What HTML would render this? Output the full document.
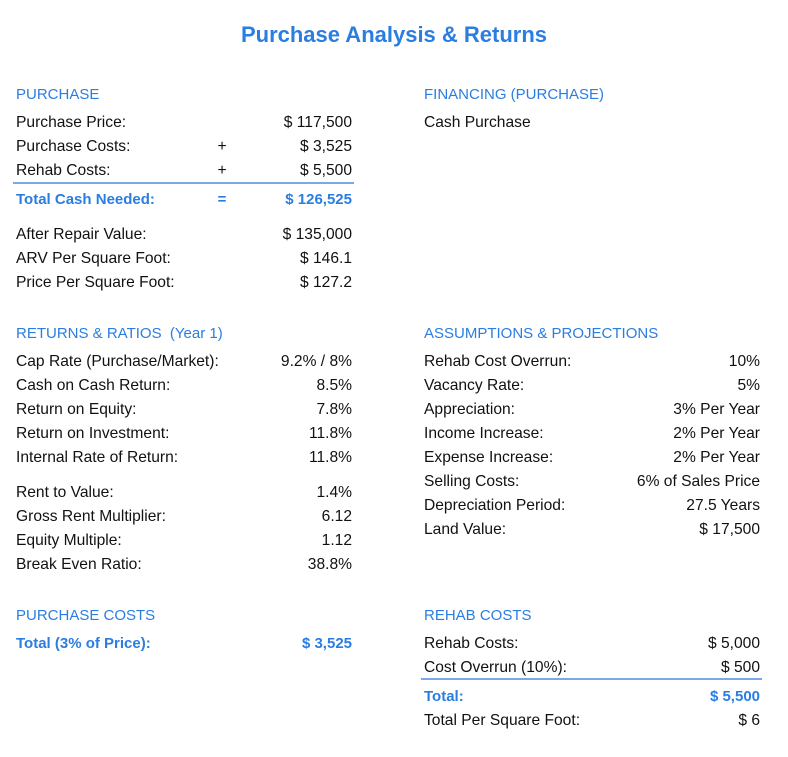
<!DOCTYPE html>
<html><head><meta charset="utf-8"><style>
body{margin:0;width:788px;height:757px;background:#fff;font-family:"Liberation Sans",sans-serif;font-size:15.6px;color:#111;position:relative;overflow:hidden}
.t{position:absolute;line-height:18px;white-space:nowrap}
.r{text-align:right}
.b{color:#2a7de1;font-size:15px}
.bb{color:#2a7de1;font-weight:bold;font-size:15px}
.op{position:absolute;width:20px;text-align:center;line-height:18px}
.ln{position:absolute;height:1.5px;background:#7aa9ea}
h1{position:absolute;top:20px;left:0;width:788px;margin:0;text-align:center;font-size:22px;font-weight:bold;color:#2a7de1;line-height:30px}
</style></head><body>
<h1>Purchase Analysis &amp; Returns</h1>

<div class="t b" style="left:16px;top:86px">PURCHASE</div>
<div class="t" style="left:16px;top:114px">Purchase Price:</div><div class="t r" style="right:436px;top:114px">$ 117,500</div>
<div class="t" style="left:16px;top:138px">Purchase Costs:</div><div class="op" style="left:212px;top:138px">+</div><div class="t r" style="right:436px;top:138px">$ 3,525</div>
<div class="t" style="left:16px;top:162px">Rehab Costs:</div><div class="op" style="left:212px;top:162px">+</div><div class="t r" style="right:436px;top:162px">$ 5,500</div>
<div class="ln" style="left:13px;width:341px;top:182px"></div>
<div class="t bb" style="left:16px;top:191px">Total Cash Needed:</div><div class="op bb" style="left:212px;top:191px">=</div><div class="t r bb" style="right:436px;top:191px">$ 126,525</div>
<div class="t" style="left:16px;top:226px">After Repair Value:</div><div class="t r" style="right:436px;top:226px">$ 135,000</div>
<div class="t" style="left:16px;top:250px">ARV Per Square Foot:</div><div class="t r" style="right:436px;top:250px">$ 146.1</div>
<div class="t" style="left:16px;top:274px">Price Per Square Foot:</div><div class="t r" style="right:436px;top:274px">$ 127.2</div>

<div class="t b" style="left:424px;top:86px">FINANCING (PURCHASE)</div>
<div class="t" style="left:424px;top:114px">Cash Purchase</div>

<div class="t b" style="left:16px;top:325px">RETURNS &amp; RATIOS &nbsp;(Year 1)</div>
<div class="t" style="left:16px;top:353px">Cap Rate (Purchase/Market):</div><div class="t r" style="right:436px;top:353px">9.2% / 8%</div>
<div class="t" style="left:16px;top:377px">Cash on Cash Return:</div><div class="t r" style="right:436px;top:377px">8.5%</div>
<div class="t" style="left:16px;top:401px">Return on Equity:</div><div class="t r" style="right:436px;top:401px">7.8%</div>
<div class="t" style="left:16px;top:425px">Return on Investment:</div><div class="t r" style="right:436px;top:425px">11.8%</div>
<div class="t" style="left:16px;top:449px">Internal Rate of Return:</div><div class="t r" style="right:436px;top:449px">11.8%</div>
<div class="t" style="left:16px;top:484px">Rent to Value:</div><div class="t r" style="right:436px;top:484px">1.4%</div>
<div class="t" style="left:16px;top:508px">Gross Rent Multiplier:</div><div class="t r" style="right:436px;top:508px">6.12</div>
<div class="t" style="left:16px;top:532px">Equity Multiple:</div><div class="t r" style="right:436px;top:532px">1.12</div>
<div class="t" style="left:16px;top:556px">Break Even Ratio:</div><div class="t r" style="right:436px;top:556px">38.8%</div>

<div class="t b" style="left:424px;top:325px">ASSUMPTIONS &amp; PROJECTIONS</div>
<div class="t" style="left:424px;top:353px">Rehab Cost Overrun:</div><div class="t r" style="right:28px;top:353px">10%</div>
<div class="t" style="left:424px;top:377px">Vacancy Rate:</div><div class="t r" style="right:28px;top:377px">5%</div>
<div class="t" style="left:424px;top:401px">Appreciation:</div><div class="t r" style="right:28px;top:401px">3% Per Year</div>
<div class="t" style="left:424px;top:425px">Income Increase:</div><div class="t r" style="right:28px;top:425px">2% Per Year</div>
<div class="t" style="left:424px;top:449px">Expense Increase:</div><div class="t r" style="right:28px;top:449px">2% Per Year</div>
<div class="t" style="left:424px;top:473px">Selling Costs:</div><div class="t r" style="right:28px;top:473px">6% of Sales Price</div>
<div class="t" style="left:424px;top:497px">Depreciation Period:</div><div class="t r" style="right:28px;top:497px">27.5 Years</div>
<div class="t" style="left:424px;top:521px">Land Value:</div><div class="t r" style="right:28px;top:521px">$ 17,500</div>

<div class="t b" style="left:16px;top:607px">PURCHASE COSTS</div>
<div class="t bb" style="left:16px;top:635px">Total (3% of Price):</div><div class="t r bb" style="right:436px;top:635px">$ 3,525</div>

<div class="t b" style="left:424px;top:607px">REHAB COSTS</div>
<div class="t" style="left:424px;top:635px">Rehab Costs:</div><div class="t r" style="right:28px;top:635px">$ 5,000</div>
<div class="t" style="left:424px;top:659px">Cost Overrun (10%):</div><div class="t r" style="right:28px;top:659px">$ 500</div>
<div class="ln" style="left:421px;width:341px;top:678px"></div>
<div class="t bb" style="left:424px;top:688px">Total:</div><div class="t r bb" style="right:28px;top:688px">$ 5,500</div>
<div class="t" style="left:424px;top:712px">Total Per Square Foot:</div><div class="t r" style="right:28px;top:712px">$ 6</div>
</body></html>
